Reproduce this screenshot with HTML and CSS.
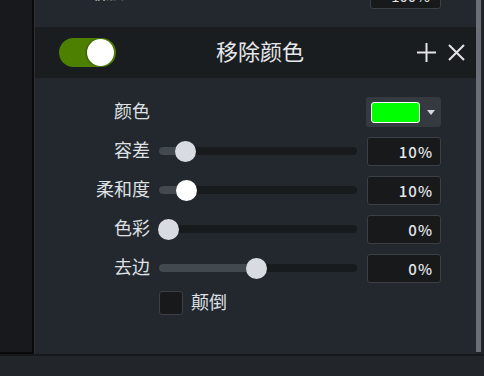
FILE: index.html
```html
<!DOCTYPE html>
<html lang="zh-CN">
<head>
    <meta charset="UTF-8">
    <meta name="viewport" content="width=device-width, initial-scale=1.0">
    <title>移除颜色</title>
    <link rel="stylesheet" href="styles.css">
</head>
<body>

<div class="main">
    <div class="sidebar"></div>

    <div class="panel">
        <!-- previous effect, scrolled mostly out of view -->
        <div class="prev-row">
            <span class="prev-label">缩放</span>
            <div class="prev-box">100%</div>
        </div>

        <div class="effect-header">
            <div class="toggle"><span class="knob"></span></div>
            <h2 class="effect-title">移除颜色</h2>
            <div class="header-icons">
                <svg width="19" height="19" viewBox="0 0 19 19"><path d="M9.5 0v19M0 9.5h19" stroke="#e2e4e8" stroke-width="2"/></svg>
                <svg width="17" height="17" viewBox="0 0 17 17"><path d="M1 1l15 15M16 1L1 16" stroke="#e2e4e8" stroke-width="2"/></svg>
            </div>
        </div>

        <div class="effect-body">
            <div class="row row-color">
                <label class="row-label">颜色</label>
                <div class="spacer"></div>
                <div class="color-pick">
                    <span class="swatch"></span>
                    <span class="arrow"></span>
                </div>
            </div>

            <div class="row">
                <label class="row-label">容差</label>
                <div class="slider">
                    <div class="fill" style="width: 26px"></div>
                    <span class="thumb" style="left: 26px"></span>
                </div>
                <div class="value">10%</div>
            </div>

            <div class="row">
                <label class="row-label">柔和度</label>
                <div class="slider">
                    <div class="fill" style="width: 27px"></div>
                    <span class="thumb hover" style="left: 27px"></span>
                </div>
                <div class="value">10%</div>
            </div>

            <div class="row">
                <label class="row-label">色彩</label>
                <div class="slider">
                    <div class="fill" style="width: 0"></div>
                    <span class="thumb" style="left: 9px"></span>
                </div>
                <div class="value">0%</div>
            </div>

            <div class="row">
                <label class="row-label">去边</label>
                <div class="slider">
                    <div class="fill" style="width: 97px"></div>
                    <span class="thumb" style="left: 97px"></span>
                </div>
                <div class="value">0%</div>
            </div>

            <div class="check-row">
                <span class="checkbox"></span>
                <span class="check-label">颠倒</span>
            </div>
        </div>
    </div>

    <div class="scrollbar"></div>
    <div class="edge"></div>
</div>

<div class="bottom-bar"></div>

</body>
</html>
```

FILE: styles.css
```css
/* Page */
body {
    margin: 0;
    width: 484px;
    height: 376px;
    overflow: hidden;
    background-color: #212529;
    font-family: 'Noto Sans CJK SC', 'Noto Sans', sans-serif;
    color: #e1e3e6;
}

.main {
    display: flex;
    height: 354px;
}

.sidebar {
    width: 34px;
    background-color: #17191c;
    border-right: 2px solid #0a0a0b;
    border-bottom: 2px solid #0a0a0b;
    box-sizing: border-box;
}

.panel {
    width: 442px;
    background-color: #23272e;
    border-left: 1px solid #2d3138;
    box-sizing: border-box;
    overflow: hidden;
}

.scrollbar {
    width: 5px;
    height: 352px;
    background-color: #6b6e76;
}

.edge {
    width: 3px;
    background-color: #1f2328;
}

.bottom-bar {
    height: 22px;
    border-top: 2px solid #16191b;
    box-sizing: border-box;
    background-color: #22262a;
}

/* Previous effect row (cut off at top) */
.prev-row {
    display: flex;
    align-items: center;
    height: 29px;
    margin-top: -20px;
    margin-bottom: 18px;
}

.prev-label {
    width: 89px;
    margin-top: -8px;
    text-align: right;
    font-size: 18px;
}

.prev-box {
    margin-left: auto;
    margin-right: 35px;
    width: 71px;
    height: 29px;
    box-sizing: border-box;
    background-color: #17191b;
    border: 1px solid #3b4046;
    border-radius: 3px;
    font-size: 15px;
    text-align: right;
    padding-right: 10px;
    line-height: 29px;
}

/* Effect header */
.effect-header {
    display: flex;
    align-items: center;
    height: 51px;
    background-color: #1a1d20;
    padding-left: 24px;
}

.toggle {
    width: 57px;
    height: 29px;
    border-radius: 15px;
    background-color: #4e8000;
    display: flex;
    align-items: center;
    justify-content: flex-end;
    padding-right: 2px;
    box-sizing: border-box;
}

.knob {
    width: 27px;
    height: 27px;
    border-radius: 50%;
    background-color: #ffffff;
    box-shadow: -1px 0 2px rgba(0, 0, 0, 0.35);
}

.effect-title {
    flex: 1;
    margin: 0;
    padding-right: 13px;
    padding-bottom: 5px;
    text-align: center;
    font-size: 22px;
    font-weight: normal;
    color: #e6e8eb;
}

.header-icons {
    display: flex;
    align-items: center;
    gap: 12px;
    padding-right: 11px;
}

/* Effect body */
.effect-body {
    padding-top: 19px;
    display: flex;
    flex-direction: column;
    gap: 9px;
}

.row {
    display: flex;
    align-items: center;
    height: 30px;
}

.row-label {
    width: 115px;
    padding-bottom: 4px;
    text-align: right;
    font-size: 18px;
    color: #dfe1e4;
}

.spacer {
    flex: 1;
}

.slider {
    position: relative;
    width: 198px;
    height: 8px;
    margin-left: 9px;
    border-radius: 4px;
    background-color: #181b1e;
}

.fill {
    height: 100%;
    border-radius: 4px;
    background-color: #424a4f;
}

.thumb {
    position: absolute;
    top: 50%;
    width: 21px;
    height: 21px;
    margin-left: -10.5px;
    margin-top: -10.5px;
    border-radius: 50%;
    background-color: #d8dbe2;
}

.thumb.hover {
    background-color: #ffffff;
}

.value {
    width: 74px;
    height: 29px;
    margin-left: 10px;
    box-sizing: border-box;
    background-color: #17191b;
    border: 1px solid #3b4046;
    border-radius: 3px;
    font-size: 15px;
    font-weight: 500;
    line-height: 27px;
    text-align: right;
    padding-right: 7px;
    letter-spacing: 1px;
    color: #e4e6ea;
}

/* Color dropdown */
.color-pick {
    width: 75px;
    height: 30px;
    margin-right: 35px;
    box-sizing: border-box;
    background-color: #353a40;
    border-radius: 3px;
    display: flex;
    align-items: center;
    padding-left: 5px;
}

.swatch {
    width: 49px;
    height: 21px;
    box-sizing: border-box;
    background-color: #00ff00;
    border: 1px solid #ffffff;
    border-radius: 3px;
}

.arrow {
    margin-left: 7px;
    width: 0;
    height: 0;
    border-left: 4px solid transparent;
    border-right: 4px solid transparent;
    border-top: 5px solid #d6d8dc;
}

/* Checkbox */
.check-row {
    display: flex;
    align-items: center;
    margin-top: -4px;
    padding-left: 124px;
    gap: 8px;
}

.checkbox {
    width: 24px;
    height: 24px;
    box-sizing: border-box;
    background-color: #17191b;
    border: 1px solid #3b4046;
    border-radius: 3px;
}

.check-label {
    font-size: 18px;
    padding-bottom: 4px;
    color: #dfe1e4;
}
```
